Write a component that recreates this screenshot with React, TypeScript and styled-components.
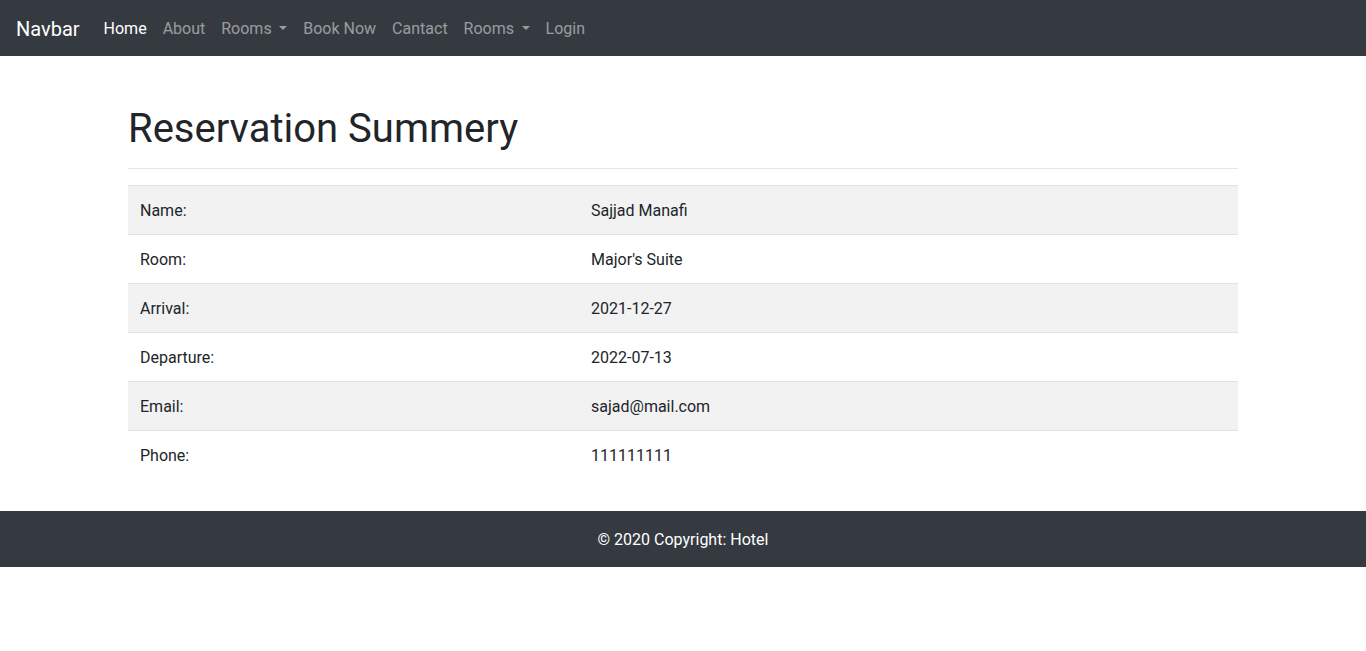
import React from 'react'
import styled, { createGlobalStyle } from 'styled-components'

const GlobalStyle = createGlobalStyle`
  *, *::before, *::after { box-sizing: border-box; }
  body {
    margin: 0;
    font-family: Roboto, "Liberation Sans", Arial, sans-serif;
    font-size: 16px;
    line-height: 1.5;
    color: #212529;
    background: #fff;
  }
`

const Navbar = styled.nav`
  display: flex;
  align-items: center;
  height: 56px;
  padding: 8px 16px;
  background: #343a40;
`

const Brand = styled.a`
  font-size: 20px;
  line-height: 30px;
  padding: 6px 0 4px;
  margin-right: 16px;
  color: #fff;
  text-decoration: none;
`

const NavList = styled.ul`
  display: flex;
  list-style: none;
  margin: 0;
  padding: 0;
`

const NavLink = styled.a<{ $active?: boolean; $dropdown?: boolean }>`
  display: block;
  padding: 9px 8px 7px;
  color: ${p => (p.$active ? '#fff' : 'rgba(255,255,255,.5)')};
  text-decoration: none;

  ${p =>
    p.$dropdown &&
    `
    &::after {
      content: '';
      display: inline-block;
      margin-left: 7.6px;
      vertical-align: 4px;
      border-top: 4.5px solid;
      border-right: 4.5px solid transparent;
      border-left: 4.5px solid transparent;
    }
  `}
`

const Container = styled.main`
  width: 1140px;
  margin: 0 auto;
  padding: 48px 15px 16px;
`

const Title = styled.h1`
  margin: 0;
  padding-top: 1px;
  font-size: 40px;
  font-weight: 400;
  line-height: 47px;
`

const Rule = styled.hr`
  margin: 16px 0;
  border: 0;
  border-top: 1px solid rgba(0, 0, 0, 0.1);
`

const Table = styled.table`
  width: 100%;
  border-collapse: collapse;
  margin-bottom: 16px;
`

const Row = styled.tr`
  &:nth-of-type(odd) {
    background: rgba(0, 0, 0, 0.05);
  }
`

const Cell = styled.td<{ $label?: boolean }>`
  padding: 13px 12px 11px;
  border-top: 1px solid #dee2e6;
  vertical-align: top;
  width: ${p => (p.$label ? '451px' : 'auto')};
`

const Footer = styled.footer`
  background: #343a40;
  color: #fff;
  text-align: center;
  padding: 17px 16px 15px;
`

const rows = [
  ['Name:', 'Sajjad Manafi'],
  ['Room:', "Major's Suite"],
  ['Arrival:', '2021-12-27'],
  ['Departure:', '2022-07-13'],
  ['Email:', 'sajad@mail.com'],
  ['Phone:', '111111111'],
]

export default function App() {
  return (
    <>
      <GlobalStyle />
      <Navbar>
        <Brand href="#">Navbar</Brand>
        <NavList>
          <li><NavLink $active href="#">Home</NavLink></li>
          <li><NavLink href="#">About</NavLink></li>
          <li><NavLink $dropdown href="#">Rooms</NavLink></li>
          <li><NavLink href="#">Book Now</NavLink></li>
          <li><NavLink href="#">Cantact</NavLink></li>
          <li><NavLink $dropdown href="#">Rooms</NavLink></li>
          <li><NavLink href="#">Login</NavLink></li>
        </NavList>
      </Navbar>

      <Container>
        <Title>Reservation Summery</Title>
        <Rule />
        <Table>
          <tbody>
            {rows.map(([label, value]) => (
              <Row key={label}>
                <Cell $label>{label}</Cell>
                <Cell>{value}</Cell>
              </Row>
            ))}
          </tbody>
        </Table>
      </Container>

      <Footer>© 2020 Copyright: Hotel</Footer>
    </>
  )
}
